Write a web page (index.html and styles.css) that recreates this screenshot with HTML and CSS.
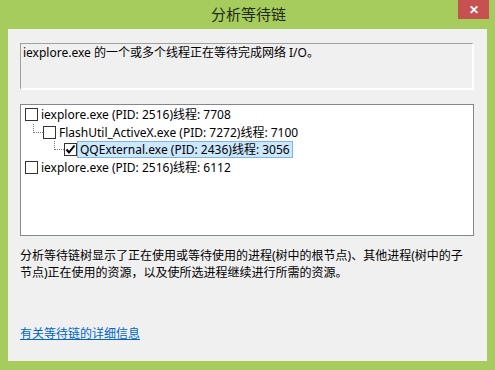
FILE: index.html
```html
<!DOCTYPE html>
<html lang="zh-CN">
<head>
    <meta charset="UTF-8">
    <title>分析等待链</title>
    <link rel="stylesheet" href="styles.css">
</head>
<body>
    <div class="window">
        <div class="title-bar">
            <span class="title">分析等待链</span>
            <span class="close-btn">✕</span>
        </div>
        <div class="client">
            <div class="info-box">iexplore.exe 的一个或多个线程正在等待完成网络 I/O。</div>

            <div class="tree-box">
                <div class="tree-row">
                    <span class="checkbox"></span>
                    <span class="label">iexplore.exe (PID: 2516)线程: 7708</span>
                </div>
                <div class="tree-row level-2">
                    <span class="branch"></span>
                    <span class="checkbox"></span>
                    <span class="label">FlashUtil_ActiveX.exe (PID: 7272)线程: 7100</span>
                </div>
                <div class="tree-row level-3">
                    <span class="branch"></span>
                    <span class="checkbox checked">
                        <svg width="11" height="11" viewBox="0 0 11 11"><path d="M1.5 5.5 L4 8.5 L9.5 1.5" fill="none" stroke="#000" stroke-width="2"/></svg>
                    </span>
                    <span class="label selected">QQExternal.exe (PID: 2436)线程: 3056</span>
                </div>
                <div class="tree-row">
                    <span class="checkbox"></span>
                    <span class="label">iexplore.exe (PID: 2516)线程: 6112</span>
                </div>
            </div>

            <p class="description">分析等待链树显示了正在使用或等待使用的进程(树中的根节点)、其他进程(树中的子<br>节点)正在使用的资源，以及使所选进程继续进行所需的资源。</p>

            <a href="#" class="more-link">有关等待链的详细信息</a>
        </div>
    </div>
</body>
</html>
```

FILE: styles.css
```css
body {
    margin: 0;
    font-family: "Noto Sans", "Noto Sans CJK SC", sans-serif;
    font-size: 12px;
    color: #000;
    background: #a6cc5e;
}
.window {
    width: 495px;
    height: 370px;
    background: #a6cc5e;
    display: flex;
    flex-direction: column;
    overflow: hidden;
}
.title-bar {
    height: 29px;
    display: flex;
    justify-content: center;
    position: relative;
}
.title {
    font-size: 15px;
    line-height: 28px;
    color: #1f2a10;
    margin-left: 2px;
}
.close-btn {
    position: absolute;
    top: 0;
    right: 6px;
    width: 31px;
    height: 19px;
    background: #c75050;
    color: #fff;
    font-size: 12px;
    line-height: 19px;
    text-align: center;
    font-weight: bold;
}
.client {
    flex: 1;
    margin: 0 8px 9px 8px;
    background: #f0f0f0;
    padding: 14px 13px 0 12px;
    display: flex;
    flex-direction: column;
}
.info-box {
    height: 44px;
    border: 1px solid;
    border-color: #a0a0a0 #fff #fff #a0a0a0;
    border-width: 1px 2px 2px 1px;
    padding: 0 2px;
    line-height: 17px;
}
.tree-box {
    margin-top: 14px;
    height: 129px;
    background: #fff;
    border: 1px solid #828790;
    padding: 1px 0 0 4px;
}
.tree-row {
    display: flex;
    align-items: center;
    height: 17.5px;
}
.level-2 {
    padding-left: 8px;
}
.level-3 {
    padding-left: 29px;
}
.branch {
    align-self: flex-start;
    width: 10px;
    height: 9px;
    border-left: 1px dotted #7a7a7a;
    border-bottom: 1px dotted #7a7a7a;
    box-sizing: border-box;
}
.checkbox {
    width: 13px;
    height: 13px;
    box-sizing: border-box;
    border: 1px solid #333;
    background: #fff;
    display: flex;
    align-items: center;
    justify-content: center;
}
.label {
    padding: 0 2px;
    line-height: 15px;
    border: 1px solid transparent;
    white-space: nowrap;
}
.label.selected {
    background: #cce8ff;
    border-color: #7eb4ea;
}
.description {
    margin: 11px 0 0 0;
    line-height: 17px;
}
.more-link {
    margin-top: 43px;
    color: #0066cc;
    text-decoration: underline;
    align-self: flex-start;
}
```
